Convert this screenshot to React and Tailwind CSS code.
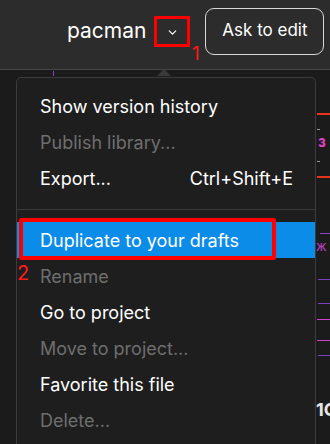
import { ChevronDown } from 'lucide-react';

const items = [
  { text: 'Show version history' },
  { text: 'Publish library...', disabled: true },
  { text: 'Export...', shortcut: 'Ctrl+Shift+E' },
  { sep: true },
  { text: 'Duplicate to your drafts', active: true },
  { text: 'Rename', disabled: true },
  { text: 'Go to project' },
  { text: 'Move to project...', disabled: true },
  { text: 'Favorite this file' },
  { text: 'Delete...', disabled: true },
];

export default function App() {
  return (
    <div
      className="relative w-[330px] h-[444px] overflow-hidden bg-[#1b1b1b] text-white"
      style={{ fontFamily: 'Inter, "Noto Sans", sans-serif' }}
    >
      {/* top bar */}
      <header className="h-[70px] bg-[#2c2c2c] border-b border-[#474747] flex items-center pb-[7px]">
        <span className="ml-[67px] text-[21px] leading-none pb-[2px]">pacman</span>
        <div className="ml-[8px] w-[36px] h-[31px] border-[3px] border-[#ff0000] flex items-center justify-center">
          <ChevronDown size={13} strokeWidth={2.2} className="text-white mt-[3px]" />
        </div>
        <button className="ml-[15px] w-[119px] h-[47px] rounded-[9px] border border-[#d9d9d9] text-[17px] text-white">
          Ask to edit
        </button>
      </header>

      {/* annotation 1 */}
      <span className="absolute left-[192px] top-[44px] text-[19px] leading-none text-[#ff1a1a]">1</span>

      {/* pointer */}
      <div className="absolute left-[157px] top-[69px] w-0 h-0 border-x-[7px] border-x-transparent border-b-[7px] border-b-[#3a3a3a]" />

      {/* menu */}
      <div className="ml-[16px] mt-[7px] w-[300px] h-[400px] bg-[#1e1e1e] border border-[#3c3c3c] rounded-t-[5px] pt-[10px]">
        {items.map((it, i) =>
          it.sep ? (
            <div key={i} className="h-[26px] flex items-center">
              <div className="w-full h-px bg-[#383838]" />
            </div>
          ) : (
            <div
              key={i}
              className={
                'h-[36px] flex items-center justify-between pl-[23px] pr-[22px] text-[18px] ' +
                (it.active ? 'bg-[#0c8ce9] text-white' : it.disabled ? 'text-[#6e6e6e]' : 'text-white')
              }
            >
              <span>{it.text}</span>
              {it.shortcut && <span>{it.shortcut}</span>}
            </div>
          )
        )}
      </div>

      {/* annotation 2 */}
      <div className="absolute left-[19px] top-[218px] w-[257px] h-[42px] border-[4px] border-[#ff0000] rounded-[2px]" />
      <span className="absolute left-[17px] top-[263px] text-[20px] leading-none text-[#ff1a1a]">2</span>

      {/* canvas bits at the right edge */}
      <div className="absolute left-[317px] top-[113px] w-[13px] h-[2px] bg-[#e8331f]" />
      <div className="absolute left-[317px] top-[129px] w-[3px] h-px bg-[#9a9a9a]" />
      <span className="absolute left-[318px] top-[134px] text-[15px] font-bold leading-none text-[#e040d0]">з</span>
      <div className="absolute left-[317px] top-[161px] w-[3px] h-px bg-[#9a9a9a]" />
      <div className="absolute left-[317px] top-[176px] w-[13px] h-[2px] bg-[#e8331f]" />
      <div className="absolute left-[320px] top-[233px] w-[10px] h-px bg-[#8a40c8]" />
      <span className="absolute left-[316px] top-[240px] text-[13px] leading-none text-[#c040c8]">ж</span>
      <div className="absolute left-[318px] top-[279px] w-[12px] h-px bg-[#7a40c0]" />
      <div className="absolute left-[318px] top-[303px] w-[12px] h-px bg-[#7a40c0]" />
      <div className="absolute left-[317px] top-[319px] w-[13px] h-px bg-[#d040d0]" />
      <div className="absolute left-[317px] top-[340px] w-[13px] h-px bg-[#d040d0]" />
      <div className="absolute left-[318px] top-[355px] w-[12px] h-px bg-[#7a40c0]" />
      <span className="absolute left-[316px] top-[401px] text-[18px] font-bold leading-none text-[#e6e6e6]">1C</span>
      <div className="absolute left-[53px] top-[71px] w-px h-[5px] bg-[#8a40c8]" />
    </div>
  );
}
